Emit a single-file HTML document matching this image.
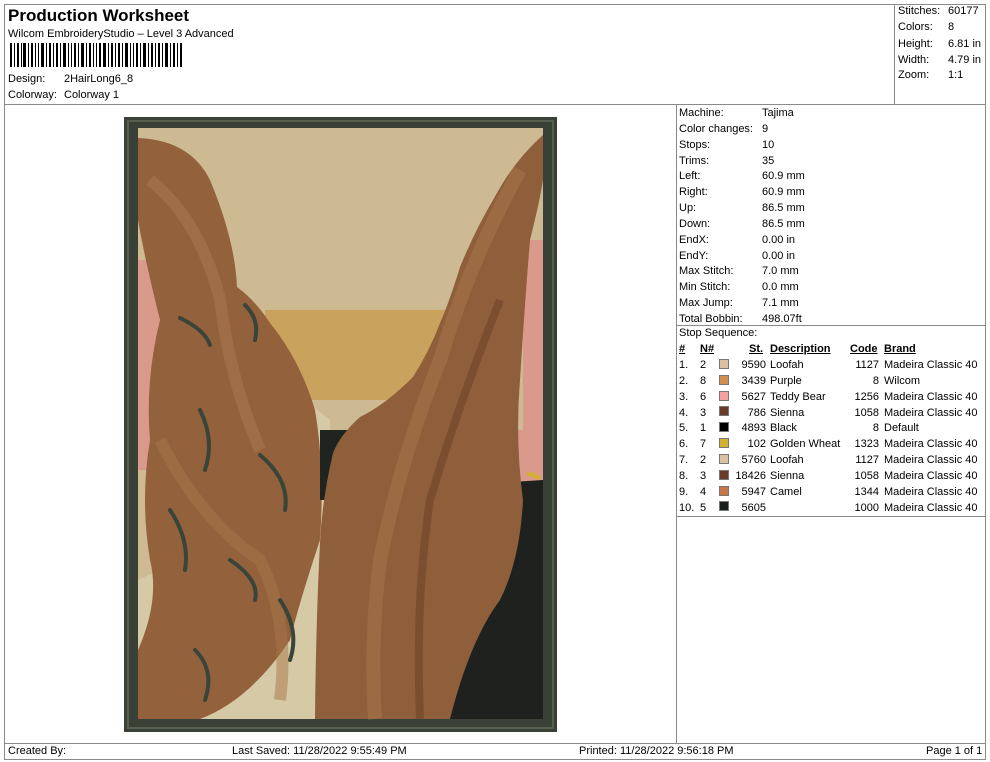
<!DOCTYPE html>
<html><head><meta charset="utf-8"><style>
*{margin:0;padding:0;box-sizing:border-box}
body{width:990px;height:762px;background:#fff;position:relative;font-family:"Liberation Sans",Arial,sans-serif;font-size:11px;color:#000;overflow:hidden}
.a{position:absolute;white-space:nowrap;line-height:13px}
.l{position:absolute;background:#8a8a8a}
.sw{position:absolute;width:10px;height:10px;border:1px solid #777}
.u{text-decoration:underline;font-weight:bold}
</style></head><body>
<div class="l" style="left:4px;top:4px;width:982px;height:1px"></div>
<div class="l" style="left:4px;top:4px;width:1px;height:756px"></div>
<div class="l" style="left:985px;top:4px;width:1px;height:756px"></div>
<div class="l" style="left:4px;top:104px;width:982px;height:1px"></div>
<div class="l" style="left:894px;top:4px;width:1px;height:100px"></div>
<div class="l" style="left:676px;top:104px;width:1px;height:640px"></div>
<div class="l" style="left:4px;top:743px;width:982px;height:1px"></div>
<div class="l" style="left:4px;top:759px;width:982px;height:1px"></div>
<div class="l" style="left:676px;top:325px;width:310px;height:1px"></div>
<div class="l" style="left:676px;top:516px;width:310px;height:1px"></div>

<div class="a" style="left:8px;top:6px;font-size:17px;font-weight:bold;line-height:20px">Production Worksheet</div>
<div class="a" style="left:8px;top:28px">Wilcom EmbroideryStudio – Level 3 Advanced</div>
<svg style="position:absolute;left:10px;top:43px" width="174" height="24">
<g fill="#000">
<rect x="0" y="0" width="2" height="24"/><rect x="4" y="0" width="1" height="24"/><rect x="7" y="0" width="2" height="24"/><rect x="11" y="0" width="1" height="24"/><rect x="13" y="0" width="3" height="24"/><rect x="18" y="0" width="1" height="24"/><rect x="21" y="0" width="2" height="24"/><rect x="25" y="0" width="1" height="24"/><rect x="28" y="0" width="1" height="24"/><rect x="31" y="0" width="3" height="24"/><rect x="36" y="0" width="1" height="24"/><rect x="39" y="0" width="2" height="24"/><rect x="43" y="0" width="1" height="24"/><rect x="46" y="0" width="2" height="24"/><rect x="50" y="0" width="1" height="24"/><rect x="53" y="0" width="3" height="24"/><rect x="58" y="0" width="1" height="24"/><rect x="61" y="0" width="1" height="24"/><rect x="64" y="0" width="2" height="24"/><rect x="68" y="0" width="1" height="24"/><rect x="71" y="0" width="3" height="24"/><rect x="76" y="0" width="1" height="24"/><rect x="79" y="0" width="2" height="24"/><rect x="83" y="0" width="1" height="24"/><rect x="86" y="0" width="1" height="24"/><rect x="89" y="0" width="2" height="24"/><rect x="93" y="0" width="3" height="24"/><rect x="98" y="0" width="1" height="24"/><rect x="101" y="0" width="2" height="24"/><rect x="105" y="0" width="1" height="24"/><rect x="108" y="0" width="2" height="24"/><rect x="112" y="0" width="1" height="24"/><rect x="115" y="0" width="3" height="24"/><rect x="120" y="0" width="1" height="24"/><rect x="123" y="0" width="1" height="24"/><rect x="126" y="0" width="2" height="24"/><rect x="130" y="0" width="1" height="24"/><rect x="133" y="0" width="3" height="24"/><rect x="138" y="0" width="1" height="24"/><rect x="141" y="0" width="2" height="24"/><rect x="145" y="0" width="1" height="24"/><rect x="148" y="0" width="2" height="24"/><rect x="152" y="0" width="1" height="24"/><rect x="155" y="0" width="3" height="24"/><rect x="160" y="0" width="1" height="24"/><rect x="163" y="0" width="2" height="24"/><rect x="167" y="0" width="1" height="24"/><rect x="170" y="0" width="2" height="24"/>
</g></svg>
<div class="a" style="left:8px;top:73px">Design:</div><div class="a" style="left:64px;top:73px">2HairLong6_8</div>
<div class="a" style="left:8px;top:89px">Colorway:</div><div class="a" style="left:64px;top:89px">Colorway 1</div>

<div class="a" style="left:898px;top:5px">Stitches:</div><div class="a" style="left:948px;top:5px">60177</div>
<div class="a" style="left:898px;top:21px">Colors:</div><div class="a" style="left:948px;top:21px">8</div>
<div class="a" style="left:898px;top:38px">Height:</div><div class="a" style="left:948px;top:38px">6.81 in</div>
<div class="a" style="left:898px;top:54px">Width:</div><div class="a" style="left:948px;top:54px">4.79 in</div>
<div class="a" style="left:898px;top:69px">Zoom:</div><div class="a" style="left:948px;top:69px">1:1</div>

<div class="a" style="left:679px;top:106px;line-height:15.85px">Machine:<br>Color changes:<br>Stops:<br>Trims:<br>Left:<br>Right:<br>Up:<br>Down:<br>EndX:<br>EndY:<br>Max Stitch:<br>Min Stitch:<br>Max Jump:<br>Total Bobbin:</div>
<div class="a" style="left:762px;top:106px;line-height:15.85px">Tajima<br>9<br>10<br>35<br>60.9 mm<br>60.9 mm<br>86.5 mm<br>86.5 mm<br>0.00 in<br>0.00 in<br>7.0 mm<br>0.0 mm<br>7.1 mm<br>498.07ft</div>
<div class="a" style="left:679px;top:327px">Stop Sequence:</div>
<div class="a u" style="left:679px;top:343px">#</div>
<div class="a u" style="left:700px;top:343px">N#</div>
<div class="a u" style="left:749px;top:343px">St.</div>
<div class="a u" style="left:770px;top:343px">Description</div>
<div class="a u" style="left:850px;top:343px">Code</div>
<div class="a u" style="left:884px;top:343px">Brand</div>
<div class="a" style="left:679px;top:358px;line-height:15.85px">1.<br>2.<br>3.<br>4.<br>5.<br>6.<br>7.<br>8.<br>9.<br>10.</div>
<div class="a" style="left:700px;top:358px;line-height:15.85px">2<br>8<br>6<br>3<br>1<br>7<br>2<br>3<br>4<br>5</div>
<div class="a" style="left:720px;top:358px;width:46px;text-align:right;line-height:15.85px">9590<br>3439<br>5627<br>786<br>4893<br>102<br>5760<br>18426<br>5947<br>5605</div>
<div class="a" style="left:770px;top:358px;line-height:15.85px">Loofah<br>Purple<br>Teddy Bear<br>Sienna<br>Black<br>Golden Wheat<br>Loofah<br>Sienna<br>Camel<br>&nbsp;</div>
<div class="a" style="left:840px;top:358px;width:39px;text-align:right;line-height:15.85px">1127<br>8<br>1256<br>1058<br>8<br>1323<br>1127<br>1058<br>1344<br>1000</div>
<div class="a" style="left:884px;top:358px;line-height:15.85px">Madeira Classic 40<br>Wilcom<br>Madeira Classic 40<br>Madeira Classic 40<br>Default<br>Madeira Classic 40<br>Madeira Classic 40<br>Madeira Classic 40<br>Madeira Classic 40<br>Madeira Classic 40</div>
<div class="sw" style="left:719px;top:359px;background:#dcc0a4"></div>
<div class="sw" style="left:719px;top:375px;background:#d09050"></div>
<div class="sw" style="left:719px;top:391px;background:#f4a0a0"></div>
<div class="sw" style="left:719px;top:406px;background:#6b3a28"></div>
<div class="sw" style="left:719px;top:422px;background:#000"></div>
<div class="sw" style="left:719px;top:438px;background:#d4b030"></div>
<div class="sw" style="left:719px;top:454px;background:#dcc0a4"></div>
<div class="sw" style="left:719px;top:470px;background:#6b3a28"></div>
<div class="sw" style="left:719px;top:486px;background:#c87848"></div>
<div class="sw" style="left:719px;top:501px;background:#1a1e1c"></div>

<svg style="position:absolute;left:124px;top:117px" width="433" height="615" viewBox="124 117 433 615">
<rect x="124" y="117" width="433" height="615" fill="#394136"/>
<rect x="128" y="121" width="425" height="607" fill="none" stroke="#55604f" stroke-width="2"/>
<rect x="138" y="128" width="405" height="591" fill="#cdba92"/>
<path d="M265 310 L445 310 L445 400 L265 400Z" fill="#c9a35e"/>
<path d="M138 260 L162 260 L162 470 L138 470Z" fill="#d99a8c"/>
<path d="M255 360 L330 420 L335 719 L138 719 L138 580 L180 560 Z" fill="#d6c9a5"/>
<path d="M138 138 Q190 140 210 180 Q235 240 237 287 Q255 300 270 323 Q300 360 315 410 Q325 470 320 540 Q300 600 290 640 Q250 700 200 719 L138 719 L138 650 Q160 600 150 560 Q140 500 150 440 Q145 380 160 320 Q145 260 138 220Z" fill="#93623d"/>
<path d="M150 180 Q200 220 220 300 Q230 380 260 450" stroke="#a97a4f" stroke-width="12" fill="none" opacity=".5"/>
<path d="M160 440 Q200 520 260 560 Q290 620 280 700" stroke="#a87548" stroke-width="12" fill="none" opacity=".5"/>
<path d="M320 430 L362 430 L362 500 L320 500Z" fill="#202420"/>
<path d="M450 470 L543 470 L543 719 L450 719Z" fill="#1e211d"/>
<path d="M523 240 L543 240 L543 480 L467 485 L465 430 L523 430Z" fill="#d99a8c"/>
<path d="M362 430 Q380 405 400 400 L420 420 L370 470Z" fill="#d99a8c"/>
<path d="M543 135 Q515 160 497 193 Q475 230 460 267 Q450 300 440 323 Q430 350 413 377 Q385 405 360 417 Q340 435 333 453 Q322 500 320 543 Q316 620 315 719 L450 719 Q470 640 500 600 Q520 560 523 500 Q515 440 520 380 Q525 300 530 240 Q540 200 543 180Z" fill="#8f5e3a"/>
<path d="M520 170 Q470 260 440 360 Q400 460 380 560 Q370 640 375 719" stroke="#a8764a" stroke-width="14" fill="none" opacity=".55"/>
<path d="M500 300 Q460 400 430 500 Q415 600 420 719" stroke="#6f4529" stroke-width="8" fill="none" opacity=".6"/>
<g stroke="#3a4438" stroke-width="4" fill="none" stroke-linecap="round">
<path d="M180 318 Q205 330 210 345"/><path d="M245 305 Q260 320 255 340"/><path d="M200 410 Q215 440 205 470"/><path d="M260 455 Q290 480 285 510"/><path d="M170 510 Q190 540 185 570"/><path d="M230 560 Q260 580 255 600"/><path d="M195 650 Q215 670 205 700"/><path d="M280 600 Q300 630 290 660"/>
</g>
<path d="M527 473 L540 478" stroke="#d4b030" stroke-width="4"/>
</svg>

<div class="a" style="left:8px;top:745px">Created By:</div>
<div class="a" style="left:232px;top:745px">Last Saved: 11/28/2022 9:55:49 PM</div>
<div class="a" style="left:579px;top:745px">Printed: 11/28/2022 9:56:18 PM</div>
<div class="a" style="left:926px;top:745px">Page 1 of 1</div>
</body></html>
